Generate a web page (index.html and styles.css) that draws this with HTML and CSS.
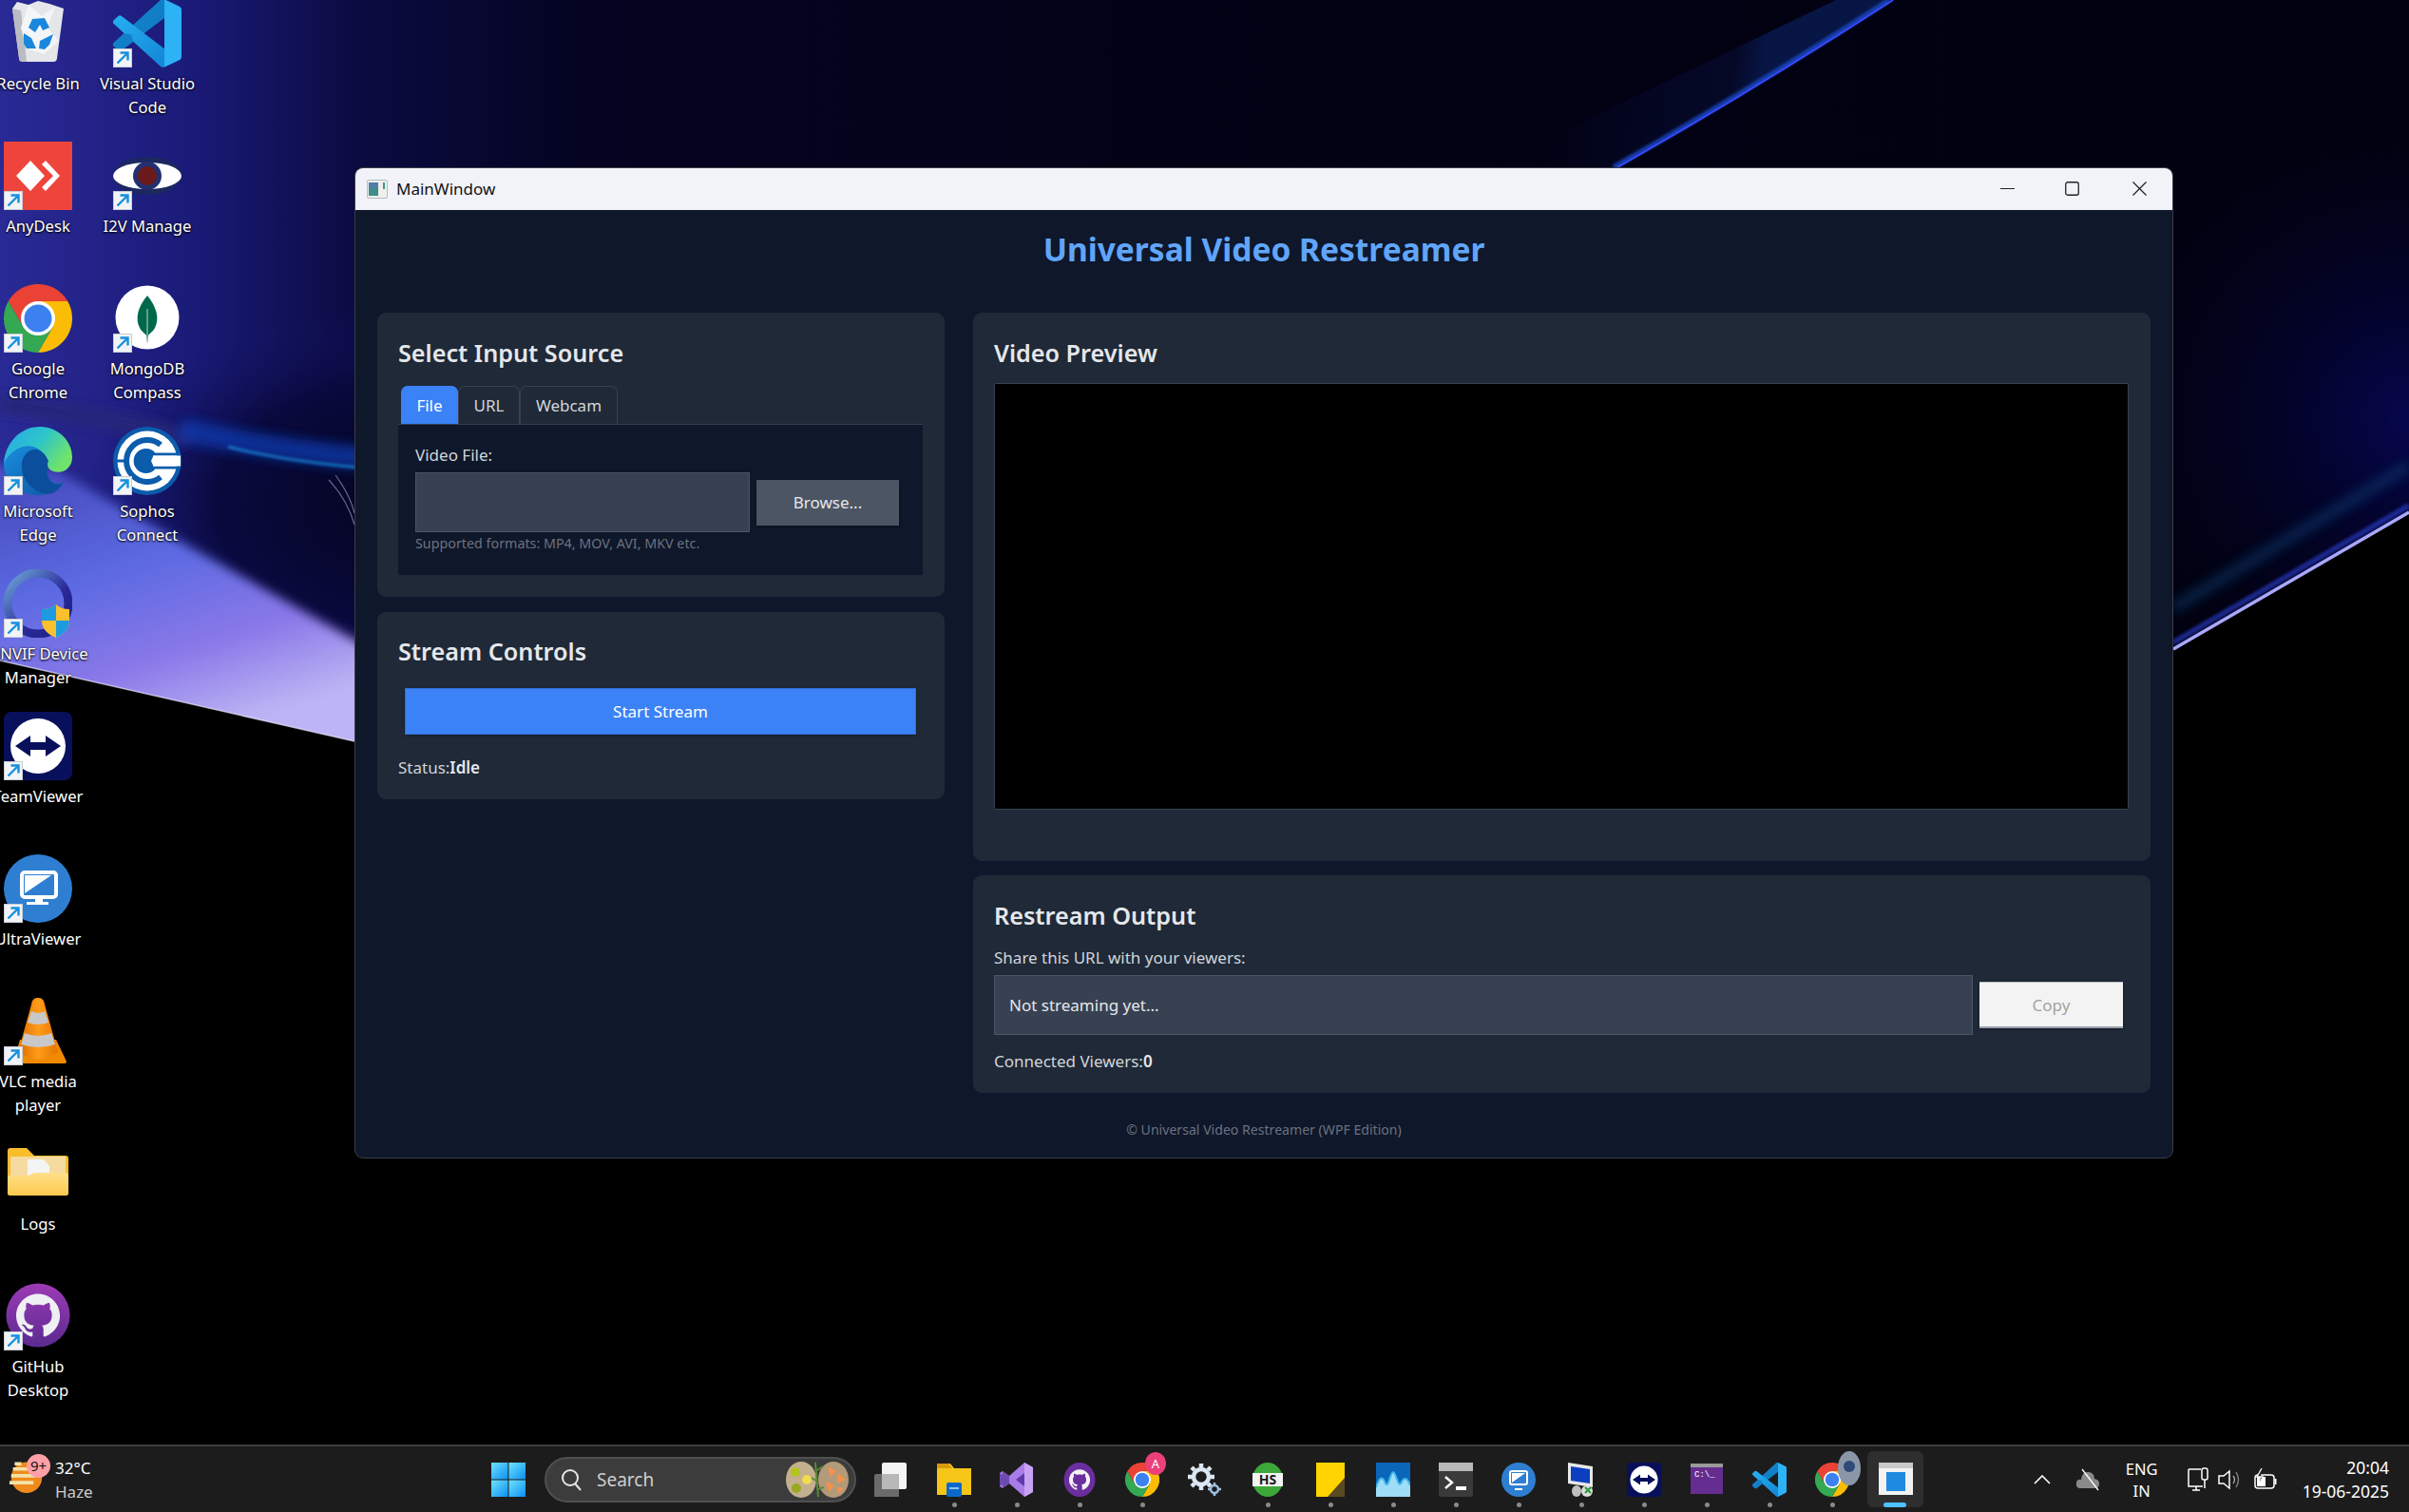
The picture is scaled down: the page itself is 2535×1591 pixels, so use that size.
FILE: index.html
```html
<!DOCTYPE html>
<html lang="en">
<head>
<meta charset="utf-8">
<title>MainWindow</title>
<link rel="stylesheet" href="styles.css">
</head>
<body>
<svg class="defs" aria-hidden="true">
  <defs>
    <linearGradient id="gVs" x1="0" y1="0" x2="1" y2="1"><stop offset="0" stop-color="#29b6f6"/><stop offset="1" stop-color="#0f7fd0"/></linearGradient>
    <linearGradient id="gEdge" x1="0" y1="0" x2="1" y2="0.5"><stop offset="0" stop-color="#2aa6ec"/><stop offset=".55" stop-color="#2cc5c9"/><stop offset="1" stop-color="#6fe36b"/></linearGradient>
    <linearGradient id="gEdgeB" x1="0" y1="0" x2="1" y2="1"><stop offset="0" stop-color="#1a8fe0"/><stop offset="1" stop-color="#0c52a0"/></linearGradient>
    <linearGradient id="gRing" x1="0" y1="0" x2="1" y2="1"><stop offset="0" stop-color="#6ea6d8"/><stop offset=".6" stop-color="#2a2a9a"/><stop offset="1" stop-color="#1d1d80"/></linearGradient>
    <linearGradient id="gGh" x1="0" y1="0" x2="0" y2="1"><stop offset="0" stop-color="#9c3bb5"/><stop offset="1" stop-color="#5b2a90"/></linearGradient>
    <linearGradient id="gWin" x1="0" y1="0" x2="1" y2="1"><stop offset="0" stop-color="#6fe3ff"/><stop offset="1" stop-color="#0a8ff0"/></linearGradient>
    <linearGradient id="gCone" x1="0" y1="0" x2="1" y2="0"><stop offset="0" stop-color="#d96a00"/><stop offset=".5" stop-color="#ff9c1a"/><stop offset="1" stop-color="#e67600"/></linearGradient>
    <linearGradient id="gFold" x1="0" y1="0" x2="0" y2="1"><stop offset="0" stop-color="#ffe08a"/><stop offset="1" stop-color="#fcc94e"/></linearGradient>

    <symbol id="i-recycle" viewBox="0 0 72 72">
      <path d="M9 10 L14 3 L26 6 L36 2 L48 5 L63 10 L56 62 Q56 66 52 66 H20 Q16 66 16 62Z" fill="#e4e6ea"/>
      <path d="M9 10 L16 62 Q16 66 20 66 H24 L18 12Z" fill="#b9bcc2"/>
      <path d="M26 6 L40 18 L54 8 L46 30 L58 44 L42 58 L24 52 L18 30Z" fill="#f4f5f7"/>
      <g fill="#1a86dc"><path d="M30 21 L43 20 L48 30 L41 33 L38 27 L33 35 L26 30Z"/><path d="M21 36 L29 41 L34 52 L24 52 L21 47Z"/><path d="M38 44 L52 37 L48 48 L43 53 L37 52Z"/></g>
    </symbol>
    <symbol id="i-vscode" viewBox="0 0 100 100">
      <path fill="url(#gVs)" d="M96.46 10.8L75.86.9a6.2 6.2 0 0 0-7.1 1.2L29.5 38 12.4 25a4.2 4.2 0 0 0-5.3.2L1.4 30.4a4.2 4.2 0 0 0 0 6.2L16.2 50 1.4 63.4a4.2 4.2 0 0 0 0 6.2l5.7 5.2a4.2 4.2 0 0 0 5.3.2l17.1-13 39.3 35.9a6.2 6.2 0 0 0 7.1 1.2l20.6-9.9a6.2 6.2 0 0 0 3.5-5.6V16.4a6.2 6.2 0 0 0-3.5-5.6zM75 72.7 45.2 50 75 27.3z"/>
      <path fill="#0865ad" d="M68.8 2.1L29.5 38l16 12L75 27.3V1.6a6 6 0 0 0-6.2.5zM16.2 50 1.4 63.4a4.2 4.2 0 0 0 0 6.2l5.7 5.2a4.2 4.2 0 0 0 5.3.2l17.1-13-3-10z" opacity=".55"/>
      <path fill="#2db2f5" d="M75 .6 96.5 10.800a6.200 6.200 0 0 1 3.500 5.600V83.600a6.200 6.200 0 0 1-3.500 5.600L75 99.400z"/>
    </symbol>
    <symbol id="i-anydesk" viewBox="0 0 72 72">
      <rect width="72" height="72" fill="#ef443b"/>
      <path d="M13 36 L28 20 L43 36 L28 52Z" fill="#fff"/>
      <path d="M40 24 L44 20 L59 36 L44 52 L40 48 L52 36Z" fill="#fff"/>
    </symbol>
    <symbol id="i-i2v" viewBox="0 0 72 72">
      <ellipse cx="36" cy="36" rx="36" ry="20" fill="#1d2860"/>
      <ellipse cx="36" cy="36" rx="36" ry="14" fill="#fff"/>
      <circle cx="36" cy="36" r="15" fill="#24306e"/>
      <circle cx="36" cy="36" r="10" fill="#6a1a1a"/>
    </symbol>
    <symbol id="i-chrome" viewBox="0 0 72 72">
      <path fill="#ea4335" d="M4.800 18A36 36 0 0 1 67.200 18L36 18 20.400 45Z"/>
      <path fill="#fbbc05" d="M67.200 18A36 36 0 0 1 36 72L51.600 45 36 18Z"/>
      <path fill="#34a853" d="M36 72A36 36 0 0 1 4.800 18L20.400 45H51.600Z"/>
      <circle cx="36" cy="36" r="18" fill="#fff"/>
      <circle cx="36" cy="36" r="14.500" fill="#3b82f0"/>
    </symbol>
    <symbol id="i-mongo" viewBox="0 0 72 72">
      <circle cx="36" cy="35" r="33.500" fill="#fff"/>
      <path d="M36 12 C46 24 49 36 44 46 C42 50 38 52 37 54 L36 62 L35 54 C34 52 30 50 28 46 C23 36 26 24 36 12Z" fill="#00684a"/>
      <path d="M35.500 26 H36.500 V62 H35.500Z" fill="#b8d8c8"/>
    </symbol>
    <symbol id="i-edge" viewBox="0 0 72 72">
      <path fill="url(#gEdgeB)" d="M0 38 C3 26 17 18 30 20 C42 22 49 32 46 42 C43 54 52 64 64 58 C56 68 46 72 36 72 C16 72 0 58 0 38Z"/>
      <path fill="#0b4f9c" d="M34 24 C22 24 16 36 20 50 C24 62 36 70 46 71 C54 70 58 66 62 60 C52 64 43 54 46 42 C48 32 42 25 34 24Z"/>
      <path fill="url(#gEdge)" d="M0 38 C2 16 18 0 38 0 C58 0 72 16 72 32 C72 44 62 50 52 47 C46 45 45 40 47 36 C42 24 30 18 20 21 C10 24 4 31 0 38Z"/>
    </symbol>
    <symbol id="i-sophos" viewBox="0 0 72 72">
      <circle cx="36" cy="36" r="36" fill="#0b5cab"/>
      <circle cx="36" cy="36" r="31.500" fill="#fff"/>
      <path d="M50 19 A22 22 0 1 0 50 53" fill="none" stroke="#0b5cab" stroke-width="6"/>
      <path d="M44 27 A13 13 0 1 0 44 45 L40 36Z" fill="#0b5cab"/>
      <path d="M2 36 H14" stroke="#0b5cab" stroke-width="3"/>
      <path d="M42 29 H68 M42 43 H68" stroke="#0b5cab" stroke-width="3"/>
      <path d="M42 30.500 H71 V41.500 H42Z" fill="#fff"/>
    </symbol>
    <symbol id="i-onvif" viewBox="0 0 72 72">
      <circle cx="36" cy="36" r="32" fill="none" stroke="url(#gRing)" stroke-width="9"/>
      <path d="M40 42 Q50 42 55 37 Q60 42 69 42 V54 Q69 66 55 72 Q40 66 40 54Z" fill="#fbc02d"/>
      <path d="M40 42 Q50 42 55 37 V54 H40Z M55 54 H69 Q69 66 55 72Z" fill="#1e9be0"/>
    </symbol>
    <symbol id="i-tv" viewBox="0 0 72 72">
      <rect width="72" height="72" rx="8" fill="#08105c"/>
      <circle cx="36" cy="36" r="29" fill="#fff"/>
      <path d="M12 36 L28 25 V32 H44 V25 L60 36 L44 47 V40 H28 V47Z" fill="#08105c"/>
    </symbol>
    <symbol id="i-ultra" viewBox="0 0 72 72">
      <circle cx="36" cy="36" r="36" fill="#2e7fd2"/>
      <rect x="19" y="19" width="36" height="26" rx="3" fill="none" stroke="#fff" stroke-width="4"/>
      <path d="M22 22 H50 L22 41Z" fill="#fff"/>
      <path d="M33 46 H41 V50 H47 V53 H24 V50 H33Z" fill="#fff"/>
    </symbol>
    <symbol id="i-vlc" viewBox="0 0 72 72">
      <path d="M17 45 H55 L66 68 Q66 70 63 70 H10 Z" fill="#f28a00"/>
      <path d="M35 1 H37 Q42 1 43 8 L57 58 Q45 66 36 66 Q27 66 15 58 L29 8 Q30 1 35 1Z" fill="url(#gCone)"/>
      <path d="M29 15 Q36 19 43 15 L47 27 Q36 31 25 27Z M22 38 Q36 44 50 38 L54 50 Q36 56 18 50Z" fill="#c8c8c8"/>
    </symbol>
    <symbol id="i-folder" viewBox="0 0 72 72">
      <path d="M4 12 Q4 9 7 9 H24 L32 17 H65 Q68 17 68 20 V56 Q68 59 65 59 H7 Q4 59 4 56Z" fill="#f9bd2c"/>
      <rect x="7" y="18" width="58" height="30" fill="#f5dba0"/>
      <path d="M25 21 H42 L48 28 V42 H25Z" fill="#f4f4f4"/>
      <path d="M4 38 H26 L32 35 H65 Q68 35 68 38 V56 Q68 59 65 59 H7 Q4 59 4 56Z" fill="url(#gFold)"/>
    </symbol>
    <symbol id="i-ghd" viewBox="0 0 72 72">
      <circle cx="36" cy="35" r="33.500" fill="url(#gGh)"/>
      <g transform="translate(13 12) scale(1.920)"><path fill="#eef0f3" d="M12 .297c-6.630 0-12 5.373-12 12 0 5.303 3.438 9.800 8.205 11.385.600.113.820-.258.820-.577 0-.285-.010-1.040-.015-2.040-3.338.724-4.042-1.610-4.042-1.610C4.422 18.070 3.633 17.700 3.633 17.700c-1.087-.744.084-.729.084-.729 1.205.084 1.838 1.236 1.838 1.236 1.070 1.835 2.809 1.305 3.495.998.108-.776.417-1.305.760-1.605-2.665-.300-5.466-1.332-5.466-5.930 0-1.310.465-2.380 1.235-3.220-.135-.303-.540-1.523.105-3.176 0 0 1.005-.322 3.300 1.230.960-.267 1.980-.399 3-.405 1.020.006 2.040.138 3 .405 2.280-1.552 3.285-1.230 3.285-1.230.645 1.653.240 2.873.120 3.176.765.840 1.230 1.910 1.230 3.220 0 4.610-2.805 5.625-5.475 5.920.420.360.810 1.096.810 2.220 0 1.606-.015 2.896-.015 3.286 0 .315.210.690.825.570C20.565 22.092 24 17.592 24 12.297c0-6.627-5.373-12-12-12"/></g>
    </symbol>
    <symbol id="i-shortcut" viewBox="0 0 20 20">
      <rect width="20" height="20" fill="#f1f3f6"/>
      <rect x=".5" y=".5" width="19" height="19" fill="none" stroke="#c9ced6"/>
      <path d="M4.500 15.500 L14 6 M7.500 4.500 H15.500 V12.500" fill="none" stroke="#1590de" stroke-width="2.400"/>
    </symbol>
    <symbol id="i-gh" viewBox="0 0 36 36">
      <ellipse cx="18" cy="18" rx="16.500" ry="18" fill="#6b2e9e"/>
      <g transform="translate(7 7) scale(.92)"><path fill="#f3f3f3" d="M12 .297c-6.630 0-12 5.373-12 12 0 5.303 3.438 9.800 8.205 11.385.600.113.820-.258.820-.577 0-.285-.010-1.040-.015-2.040-3.338.724-4.042-1.610-4.042-1.610C4.422 18.070 3.633 17.700 3.633 17.700c-1.087-.744.084-.729.084-.729 1.205.084 1.838 1.236 1.838 1.236 1.070 1.835 2.809 1.305 3.495.998.108-.776.417-1.305.760-1.605-2.665-.300-5.466-1.332-5.466-5.930 0-1.310.465-2.380 1.235-3.220-.135-.303-.540-1.523.105-3.176 0 0 1.005-.322 3.300 1.230.960-.267 1.980-.399 3-.405 1.020.006 2.040.138 3 .405 2.280-1.552 3.285-1.230 3.285-1.230.645 1.653.240 2.873.120 3.176.765.840 1.230 1.910 1.230 3.220 0 4.610-2.805 5.625-5.475 5.920.420.360.810 1.096.810 2.220 0 1.606-.015 2.896-.015 3.286 0 .315.210.690.825.570C20.565 22.092 24 17.592 24 12.297c0-6.627-5.373-12-12-12"/></g>
    </symbol>
  </defs>
</svg>

<div class="desktop">
  <svg class="wallpaper" viewBox="0 0 2535 1591" preserveAspectRatio="none" aria-hidden="true">
    <defs>
      <linearGradient id="wBase" gradientUnits="userSpaceOnUse" x1="0" y1="0" x2="2535" y2="0"><stop offset="0" stop-color="#2a2a96"/><stop offset=".08" stop-color="#1a1a78"/><stop offset=".147" stop-color="#0b0b42"/><stop offset=".24" stop-color="#040422"/><stop offset=".5" stop-color="#020216"/><stop offset="1" stop-color="#01010f"/></linearGradient>
      <linearGradient id="wLav" gradientUnits="userSpaceOnUse" x1="130" y1="490" x2="220" y2="770"><stop offset="0" stop-color="#4a50c4"/><stop offset=".35" stop-color="#5c6ae2"/><stop offset=".7" stop-color="#8a78e8"/><stop offset="1" stop-color="#bcb4f4"/></linearGradient>
      <radialGradient id="wWedge"><stop offset="0" stop-color="#04051f"/><stop offset=".6" stop-color="#08083a" stop-opacity=".9"/><stop offset="1" stop-color="#14146a" stop-opacity="0"/></radialGradient>
      <radialGradient id="wNavy" gradientUnits="userSpaceOnUse" cx="2535" cy="440" r="330"><stop offset="0" stop-color="#06064e"/><stop offset="1" stop-color="#030320" stop-opacity="0"/></radialGradient>
      <linearGradient id="wStreak" gradientUnits="userSpaceOnUse" x1="1640" y1="70" x2="1850" y2="100"><stop offset="0" stop-color="#1530a0" stop-opacity="0"/><stop offset=".85" stop-color="#10206a" stop-opacity=".22"/><stop offset="1" stop-color="#123aa0" stop-opacity=".35"/></linearGradient>
      <filter id="wBlur" filterUnits="userSpaceOnUse" x="-100" y="-100" width="2800" height="1800"><feGaussianBlur stdDeviation="6"/></filter>
      <filter id="wBlurS" filterUnits="userSpaceOnUse" x="-100" y="-100" width="2800" height="1800"><feGaussianBlur stdDeviation="1.500"/></filter>
    </defs>
    <rect width="2535" height="1591" fill="url(#wBase)"/>
    <rect x="2000" y="100" width="535" height="700" fill="url(#wNavy)"/>
    <ellipse cx="430" cy="530" rx="340" ry="210" fill="url(#wWedge)"/>
    <path d="M0 425 Q120 440 200 462" stroke="#28287a" stroke-width="18" fill="none" filter="url(#wBlur)"/>
    <path d="M190 452 Q280 472 400 484" stroke="#0a3ab0" stroke-width="24" fill="none" opacity=".75" filter="url(#wBlur)"/>
    <path d="M240 470 Q300 486 400 494" stroke="#18a0f0" stroke-width="3" fill="none" opacity=".65" filter="url(#wBlurS)"/>
    <path d="M-40 485 L60 495 L130 536 L420 700 V830 L-40 760Z" fill="url(#wLav)" filter="url(#wBlur)"/>
    <path d="M353 500 Q368 520 373 540 M346 505 Q365 525 373 552" stroke="#c8c8f0" stroke-width="1.200" fill="none" opacity=".5"/>
    <path d="M1566 176 L1932 0 L1992 0 Q1850 92 1702 176Z" fill="url(#wStreak)"/>
    <path d="M1698 176 Q1846 92 1988 0" stroke="#1a50d8" stroke-width="5" fill="none" opacity=".8" filter="url(#wBlurS)"/>
    <path d="M1702 176 Q1850 92 1992 0" stroke="#3a48ff" stroke-width="2" fill="none"/>
    <path d="M2287 640 L2535 490" stroke="#0a4a80" stroke-width="12" opacity=".45" fill="none" filter="url(#wBlur)"/>
    <path d="M2287 676 L2535 532" stroke="#2838c0" stroke-width="6" opacity=".7" fill="none" filter="url(#wBlurS)"/>
    <path d="M0 695 L373 780 L1300 1000 L2287 684 L2535 540 V1591 H0Z" fill="#000"/>
    <path d="M0 695 L373 780" stroke="#e8e6ff" stroke-width="1.500" opacity=".7"/>
    <path d="M2287 683 L2535 539" stroke="#aaa8ff" stroke-width="3.500"/>
  </svg>

  <div class="icons">
    <div class="dicon"><svg class="dicon-img"><use href="#i-recycle"/></svg><span class="dicon-label">Recycle Bin</span></div>
    <div class="dicon"><svg class="dicon-img"><use href="#i-anydesk"/></svg><svg class="sc"><use href="#i-shortcut"/></svg><span class="dicon-label">AnyDesk</span></div>
    <div class="dicon"><svg class="dicon-img"><use href="#i-chrome"/></svg><svg class="sc"><use href="#i-shortcut"/></svg><span class="dicon-label">Google Chrome</span></div>
    <div class="dicon"><svg class="dicon-img"><use href="#i-edge"/></svg><svg class="sc"><use href="#i-shortcut"/></svg><span class="dicon-label">Microsoft Edge</span></div>
    <div class="dicon"><svg class="dicon-img"><use href="#i-onvif"/></svg><svg class="sc"><use href="#i-shortcut"/></svg><span class="dicon-label">ONVIF Device Manager</span></div>
    <div class="dicon"><svg class="dicon-img"><use href="#i-tv"/></svg><svg class="sc"><use href="#i-shortcut"/></svg><span class="dicon-label">TeamViewer</span></div>
    <div class="dicon"><svg class="dicon-img"><use href="#i-ultra"/></svg><svg class="sc"><use href="#i-shortcut"/></svg><span class="dicon-label">UltraViewer</span></div>
    <div class="dicon"><svg class="dicon-img"><use href="#i-vlc"/></svg><svg class="sc"><use href="#i-shortcut"/></svg><span class="dicon-label">VLC media player</span></div>
    <div class="dicon"><svg class="dicon-img"><use href="#i-folder"/></svg><span class="dicon-label">Logs</span></div>
    <div class="dicon"><svg class="dicon-img"><use href="#i-ghd"/></svg><svg class="sc"><use href="#i-shortcut"/></svg><span class="dicon-label">GitHub Desktop</span></div>
    <div class="dicon"><svg class="dicon-img"><use href="#i-vscode"/></svg><svg class="sc"><use href="#i-shortcut"/></svg><span class="dicon-label">Visual Studio Code</span></div>
    <div class="dicon"><svg class="dicon-img"><use href="#i-i2v"/></svg><svg class="sc"><use href="#i-shortcut"/></svg><span class="dicon-label">I2V Manage</span></div>
    <div class="dicon"><svg class="dicon-img"><use href="#i-mongo"/></svg><svg class="sc"><use href="#i-shortcut"/></svg><span class="dicon-label">MongoDB Compass</span></div>
    <div class="dicon"><svg class="dicon-img"><use href="#i-sophos"/></svg><svg class="sc"><use href="#i-shortcut"/></svg><span class="dicon-label">Sophos Connect</span></div>
  </div>

  <div class="window">
    <div class="titlebar">
      <svg class="app-icon" viewBox="0 0 22 20"><rect x=".5" y=".5" width="21" height="19" rx="1.500" fill="#eef0ee" stroke="#b8bcc0"/><rect x="2" y="3" width="10" height="14" fill="#3f8f86"/><rect x="2" y="3" width="10" height="6" fill="#4f7fa8"/><rect x="17" y="3" width="2" height="7" fill="#3a9a78"/></svg>
      <span class="titlebar-text">MainWindow</span>
      <div class="caption">
        <svg class="cap-btn cap-min" viewBox="0 0 15 15"><path d="M0 7.500 H15" stroke="#222" stroke-width="1.200"/></svg>
        <svg class="cap-btn" viewBox="0 0 15 15"><rect x=".75" y=".75" width="13.500" height="13.500" rx="2" fill="none" stroke="#222" stroke-width="1.300"/></svg>
        <svg class="cap-btn" viewBox="0 0 15 15"><path d="M.5 .5 L14.500 14.500 M14.500 .5 L.5 14.500" stroke="#222" stroke-width="1.300"/></svg>
      </div>
    </div>
    <div class="content">
      <h1 class="app-title">Universal Video Restreamer</h1>
      <div class="columns">
        <div class="col-left">
          <section class="card card-input">
            <h2 class="card-title">Select Input Source</h2>
            <div class="tabs">
              <span class="tab tab-file tab-active">File</span>
              <span class="tab tab-url">URL</span>
              <span class="tab tab-webcam">Webcam</span>
            </div>
            <div class="tab-panel">
              <div class="label">Video File:</div>
              <div class="file-row">
                <div class="field field-file"></div>
                <div class="btn btn-browse">Browse...</div>
              </div>
              <div class="hint">Supported formats: MP4, MOV, AVI, MKV etc.</div>
            </div>
          </section>
          <section class="card card-controls">
            <h2 class="card-title">Stream Controls</h2>
            <div class="btn btn-start">Start Stream</div>
            <div class="label status">Status:<b class="strong">Idle</b></div>
          </section>
        </div>
        <div class="col-right">
          <section class="card card-preview">
            <h2 class="card-title">Video Preview</h2>
            <div class="video"></div>
          </section>
          <section class="card card-output">
            <h2 class="card-title">Restream Output</h2>
            <div class="label share">Share this URL with your viewers:</div>
            <div class="url-row">
              <div class="field field-url">Not streaming yet...</div>
              <div class="btn btn-copy">Copy</div>
            </div>
            <div class="label viewers">Connected Viewers:<b class="strong">0</b></div>
          </section>
        </div>
      </div>
      <div class="footer">© Universal Video Restreamer (WPF Edition)</div>
    </div>
  </div>

  <div class="taskbar">
    <div class="weather">
      <svg class="weather-icon" viewBox="0 0 40 46"><circle cx="20" cy="26" r="18" fill="#f08a1c"/><path d="M4 16 H24 M2 24 H30 M0 32 H28" stroke="#f3e2a8" stroke-width="4"/><path d="M6 10 H14" stroke="#f3e2a8" stroke-width="4"/></svg>
      <span class="badge-9">9+</span>
      <div class="weather-text"><span>32°C</span><span>Haze</span></div>
    </div>
    <svg class="win-logo" viewBox="0 0 36 36"><rect width="17.500" height="17.500" fill="url(#gWin)"/><rect x="18.500" width="17.500" height="17.500" fill="url(#gWin)"/><rect y="18.500" width="17.500" height="17.500" fill="url(#gWin)"/><rect x="18.500" y="18.500" width="17.500" height="17.500" fill="url(#gWin)"/></svg>
    <div class="search">
      <svg class="search-icon" viewBox="0 0 22 24"><circle cx="10" cy="10" r="8" fill="none" stroke="#e6e6e6" stroke-width="2"/><path d="M15 16 L21 23" stroke="#e6e6e6" stroke-width="2"/></svg>
      <span class="search-text">Search</span>
      <svg class="search-art" viewBox="0 0 70 40"><ellipse cx="18" cy="20" rx="16" ry="19" fill="#c4b08e"/><ellipse cx="52" cy="20" rx="16" ry="19" fill="#b39a78"/><circle cx="12" cy="12" r="5" fill="#b4c420"/><circle cx="24" cy="20" r="5" fill="#f0dc50"/><circle cx="13" cy="29" r="5" fill="#98a820"/><path d="M46 6 l9 5 -6 6z M57 13 l8 7 -9 4z M44 22 l9 4 -6 7z M56 28 l7 1 -6 6z" fill="#f4914e"/><path d="M33 2 L36 38 M35 10 L41 6 M35 22 L29 18 M36 30 L42 28" stroke="#5a8a38" stroke-width="2"/></svg>
    </div>
    <div class="apps">
      <div class="app"><svg class="app-svg" viewBox="0 0 36 36"><rect x="8" width="26" height="28" rx="2" fill="#f4f4f4"/><rect x="0" y="12" width="26" height="34" rx="2" fill="#6b6b6b"/><rect x="8" y="12" width="18" height="16" fill="#b8b8b8"/></svg></div>
      <div class="app dot"><svg class="app-svg" viewBox="0 0 36 36"><path d="M0 3 Q0 1 2 1 H14 L18 6 H36 V34 H0Z" fill="#f5c518"/><path d="M0 1 H12 L16 6 H0Z" fill="#d99a10"/><rect x="10" y="21" width="16" height="15" rx="2" fill="#0a68c8"/><rect x="13" y="26" width="10" height="2" fill="#8cc4f4"/></svg></div>
      <div class="app dot"><svg class="app-svg" viewBox="0 0 36 36"><path d="M26 0 L35 5 V31 L26 36 L10 22 L3 27 L0 25 V11 L3 9 L10 14Z" fill="#a97ce8"/><path d="M26 0 L35 5 V31 L26 36Z" fill="#c9a2f5"/><path d="M0 11 L10 18 L0 25Z M3 9 L10 14 V22 L3 27Z" fill="#6c4ab0"/><path d="M26 11 L17 18 L26 25Z" fill="#5f3aa8"/></svg></div>
      <div class="app dot"><svg class="app-svg"><use href="#i-gh"/></svg></div>
      <div class="app dot"><svg class="app-svg"><use href="#i-chrome"/></svg><span class="app-badge">A</span></div>
      <div class="app"><svg class="app-svg" viewBox="0 0 36 36"><g fill="none" stroke="#dbe7f2" stroke-width="4.500"><circle cx="14" cy="15" r="8"/><path d="M14 1 V5 M14 25 V29 M0 15 H4 M24 15 H28 M4 5 L7 8 M21 22 L24 25 M24 5 L21 8 M7 22 L4 25"/></g><g fill="none" stroke="#9cc0e0" stroke-width="2.500"><circle cx="28" cy="28" r="4"/><path d="M28 21 V24 M28 32 V35 M21 28 H24 M32 28 H35"/></g></svg></div>
      <div class="app dot"><svg class="app-svg" viewBox="0 0 36 36"><ellipse cx="18" cy="18" rx="16" ry="18" fill="#3da83a"/><path d="M2 11 H34 V25 H2Z" fill="#f3f3f3"/><text class="hs-text" x="18" y="23">HS</text></svg></div>
      <div class="app dot"><svg class="app-svg" viewBox="0 0 36 36"><path d="M3 0 H33 V36 H3Z" fill="#ffd400"/><path d="M33 16 V36 H15Z" fill="#5a4a20"/></svg></div>
      <div class="app dot"><svg class="app-svg" viewBox="0 0 36 36"><rect y="0" width="36" height="36" fill="#0a66b8"/><path d="M0 26 C4 14 7 14 10 22 C13 28 15 10 18 10 C21 10 23 26 26 22 C29 16 32 14 36 24 V36 H0Z" fill="#9fdcf6"/><path d="M0 26 C4 14 7 14 10 22 C13 28 15 10 18 10 C21 10 23 26 26 22 C29 16 32 14 36 24" fill="none" stroke="#3fb6ea" stroke-width="2"/></svg></div>
      <div class="app dot"><svg class="app-svg" viewBox="0 0 36 36"><rect width="36" height="36" rx="3" fill="#3a3a3a"/><rect width="36" height="9" fill="#b8b8b8"/><path d="M7 15 L14 21 L7 27" fill="none" stroke="#fff" stroke-width="2.500"/><rect x="18" y="25" width="11" height="4" fill="#fff"/></svg></div>
      <div class="app dot"><svg class="app-svg" viewBox="0 0 36 36"><ellipse cx="18" cy="18" rx="18" ry="18" fill="#2e7fd2"/><rect x="9" y="9" width="18" height="14" rx="2" fill="none" stroke="#fff" stroke-width="2"/><path d="M11 21 L25 11 H11Z" fill="#fff"/><path d="M14 27 H22 V29 H14Z" fill="#fff"/></svg></div>
      <div class="app dot"><svg class="app-svg" viewBox="0 0 36 36"><path d="M4 0 L30 4 V26 L4 22Z" fill="#e8e8e8"/><path d="M7 4 L27 7 V22 L7 19Z" fill="#0c3fc0"/><circle cx="24" cy="30" r="6" fill="#ddd"/><path d="M22 26 L28 32 M28 26 L22 32" stroke="#2a9a3a" stroke-width="2"/><ellipse cx="13" cy="30" rx="5" ry="6" fill="#c0c0c0"/></svg></div>
      <div class="app dot"><svg class="app-svg"><use href="#i-tv"/></svg></div>
      <div class="app dot"><svg class="app-svg" viewBox="0 0 36 36"><rect x="1" y="1" width="34" height="32" fill="#652d90"/><rect x="1" y="1" width="34" height="4" fill="#9a9a9a"/><text class="prompt-text" x="5" y="15">C:\_</text></svg></div>
      <div class="app dot"><svg class="app-svg"><use href="#i-vscode"/></svg></div>
      <div class="app dot"><svg class="app-svg"><use href="#i-chrome"/></svg><svg class="app-avatar" viewBox="0 0 24 36"><ellipse cx="12" cy="18" rx="12" ry="18" fill="#8a97a8"/><circle cx="12" cy="16" r="6" fill="#2d4a78"/></svg></div>
      <div class="app app-active"><svg class="app-svg" viewBox="0 0 36 36"><rect width="36" height="34" fill="#f2f2f2"/><rect width="36" height="6" fill="#c8c8c8"/><rect x="8" y="10" width="20" height="20" fill="#1e8ae0"/></svg></div>
    </div>
    <div class="tray">
      <svg class="tray-chevron" viewBox="0 0 18 10"><path d="M1 9 L9 1 L17 9" fill="none" stroke="#fff" stroke-width="1.600"/></svg>
      <svg class="tray-cloud" viewBox="0 0 26 24"><path d="M4 21 Q0 20 1 15 Q2 11 6 12 Q7 3 14 4 Q20 5 20 11 Q25 12 25 16 Q25 21 21 21Z" fill="#8a8a8a"/><path d="M7 1 L24 23" stroke="#fff" stroke-width="1.300"/></svg>
      <div class="tray-lang"><span>ENG</span><span>IN</span></div>
      <svg class="tray-net" viewBox="0 0 24 26"><path d="M2 2 H15 M2 2 V20 H17" fill="none" stroke="#fff" stroke-width="1.500"/><rect x="16" y="1" width="6" height="12" rx="2" fill="none" stroke="#fff" stroke-width="1.500"/><path d="M19 13 V22 M6 24 H14 M10 20 V24" stroke="#fff" stroke-width="1.500"/></svg>
      <svg class="tray-vol" viewBox="0 0 26 24"><path d="M2 8 H7 L13 3 V21 L7 16 H2Z" fill="none" stroke="#fff" stroke-width="1.500"/><path d="M17 8 Q20 12 17 16" fill="none" stroke="#aaa" stroke-width="1.300"/><path d="M20 4 Q25 12 20 20" fill="none" stroke="#888" stroke-width="1.300"/></svg>
      <svg class="tray-bat" viewBox="0 0 26 24"><rect x="2" y="7" width="20" height="14" rx="3" fill="none" stroke="#fff" stroke-width="1.500"/><rect x="22.500" y="11" width="2" height="6" fill="#fff"/><rect x="4" y="9" width="9" height="10" fill="#fff"/><path d="M9 0 L4 9 H10 L7 16" fill="#1c1c1c" stroke="#fff" stroke-width="1.300"/></svg>
      <div class="tray-clock"><span>20:04</span><span>19-06-2025</span></div>
    </div>
  </div>
</div>
</body>
</html>
```

FILE: styles.css
```css
html, body {
  margin: 0;
  padding: 0;
  background: #000;
}
body {
  width: 2535px;
  height: 1591px;
  overflow: hidden;
  font-family: "Noto Sans", "Open Sans", sans-serif;
}
h1, h2 { margin: 0; }
.defs { position: absolute; width: 0; height: 0; }
.desktop { position: relative; width: 2535px; height: 1591px; overflow: hidden; }
.wallpaper { position: absolute; inset: 0; width: 2535px; height: 1591px; }

/* desktop icons */
.icons {
  position: absolute;
  left: -17px;
  top: -1px;
  display: grid;
  grid-auto-flow: column;
  grid-template-rows: repeat(10, 150px);
  grid-auto-columns: 114px;
  column-gap: 1px;
}
.dicon {
  position: relative;
  display: flex;
  flex-direction: column;
  align-items: center;
}
.dicon-img { width: 72px; height: 72px; flex: none; }
.sc { position: absolute; left: 21px; top: 52px; width: 20px; height: 20px; }
.dicon-label {
  margin-top: 4px;
  width: 114px;
  text-align: center;
  color: #fff;
  font-size: 16.6px;
  line-height: 25px;
  text-shadow: 0 1px 2px #000, 0 0 3px rgba(0,0,0,.7);
}

/* window */
.window {
  position: absolute;
  left: 373px;
  top: 176px;
  width: 1914px;
  height: 1043px;
  box-sizing: border-box;
  border: 1px solid #3b3c46;
  border-radius: 9px;
  background: #0f172a;
  display: flex;
  flex-direction: column;
  overflow: hidden;
}
.titlebar {
  flex: none;
  height: 44px;
  display: flex;
  align-items: center;
  background: #f1f3f9;
  padding-left: 12px;
  padding-bottom: 1px;
  box-sizing: border-box;
  color: #111;
}
.app-icon { width: 22px; height: 20px; flex: none; margin-right: 9px; }
.titlebar-text { font-size: 17px; }
.caption { margin-left: auto; display: flex; gap: 56px; padding-right: 27px; }
.cap-btn { width: 15px; height: 15px; display: block; }
.cap-min { margin-right: -3px; }
.content {
  flex: 1;
  display: flex;
  flex-direction: column;
  padding: 0 23px;
  min-height: 0;
}
.app-title {
  height: 108px;
  box-sizing: border-box;
  padding-top: 16px;
  text-align: center;
  font-size: 33.500px;
  line-height: 50px;
  font-weight: 700;
  color: #60a5fa;
}
.columns { display: flex; gap: 30px; }
.col-left { width: 597px; flex: none; display: flex; flex-direction: column; gap: 16px; }
.col-right { flex: 1; display: flex; flex-direction: column; gap: 15px; min-width: 0; }
.card {
  background: #1f2937;
  border-radius: 9px;
  padding: 24px 23px 23px 22px;
  box-sizing: border-box;
}
.card-title {
  font-size: 25.200px;
  line-height: 36px;
  font-weight: 600;
  color: #e5e7eb;
}
.tabs { display: flex; margin-top: 17px; padding-left: 3px; height: 40px; }
.tab {
  box-sizing: border-box;
  display: flex;
  align-items: center;
  justify-content: center;
  height: 40px;
  font-size: 17px;
  color: #d1d5db;
  background: #1f2937;
  border: 1px solid #374151;
  border-bottom: 0;
  border-radius: 7px 7px 0 0;
}
.tab-file { width: 60px; }
.tab-url { width: 65px; }
.tab-webcam { width: 103px; }
.tab-active { background: #3b82f6; border-color: #3b82f6; color: #fff; }
.tab-panel {
  background: #0f172a;
  border-top: 1px solid #374151;
  padding: 20px 18px 22px;
}
.label { font-size: 17px; line-height: 24px; color: #d1d5db; }
.strong { color: #e5e7eb; font-weight: 600; }
.file-row { display: flex; align-items: center; gap: 7px; margin-top: 6px; }
.field {
  box-sizing: border-box;
  height: 63px;
  background: #374151;
  border: 1px solid #4b5563;
}
.field-file { width: 352px; }
.btn {
  box-sizing: border-box;
  display: flex;
  align-items: center;
  justify-content: center;
  font-size: 17px;
  box-shadow: 0 1px 3px rgba(0,0,0,.35);
}
.btn-browse { width: 150px; height: 48px; background: #4b5563; color: #e5e7eb; }
.hint { font-size: 14.300px; line-height: 23px; color: #6b7280; }
.card-controls { padding-bottom: 21px; padding-top: 23px; }
.btn-start {
  width: 538px;
  height: 49px;
  margin: 21px 0 0 7px;
  background: #3b82f6;
  border: 1px solid #2f6fd8;
  color: #fff;
}
.status { margin-top: 23px; }
.card-preview { height: 577px; }
.video {
  box-sizing: border-box;
  height: 449px;
  margin-top: 14px;
  background: #000;
  border: 1px solid #374151;
  border-radius: 2px;
}
.card-output { height: 229px; }
.share { margin-top: 15px; }
.url-row { display: flex; align-items: center; gap: 7px; margin-top: 6px; }
.field-url {
  flex: 1;
  display: flex;
  align-items: center;
  padding-left: 15px;
  color: #e5e7eb;
  font-size: 17px;
}
.btn-copy {
  width: 151px;
  height: 49px;
  margin-right: 6px;
  background: #f3f3f3;
  border-top: 1px solid #b8bcc2;
  border-bottom: 2px solid #9ca3af;
  color: #a3a3a3;
}
.viewers { margin-top: 16px; }
.footer {
  margin-top: 27px;
  text-align: center;
  font-size: 14.100px;
  line-height: 24px;
  color: #6b7280;
}

/* taskbar */
.taskbar {
  position: absolute;
  left: 0;
  right: 0;
  bottom: 0;
  height: 71px;
  box-sizing: border-box;
  background: #1c1c1c;
  border-top: 2px solid #3e3e3e;
  display: flex;
  align-items: center;
  color: #fff;
}
.weather { position: relative; width: 517px; flex: none; height: 69px; display: flex; align-items: center; }
.weather-icon { position: absolute; left: 10px; top: 9px; width: 36px; height: 42px; }
.badge-9 {
  position: absolute;
  left: 28px;
  top: 8px;
  width: 25px;
  height: 25px;
  border-radius: 50%;
  background: #ffa0a8;
  color: #111;
  font-size: 15px;
  line-height: 25px;
  text-align: center;
}
.weather-text {
  position: relative;
  margin-left: 58px;
  display: flex;
  flex-direction: column;
  font-size: 17px;
  line-height: 25px;
}
.weather-text span:last-child { color: #ccc; }
.win-logo { width: 36px; height: 36px; flex: none; }
.search {
  flex: none;
  margin-left: 20px;
  width: 328px;
  height: 48px;
  box-sizing: border-box;
  border: 2px solid #505050;
  border-radius: 24px;
  background: #3c3c3c;
  display: flex;
  align-items: center;
  padding-left: 15px;
}
.search-icon { width: 22px; height: 24px; flex: none; }
.search-text { margin-left: 16px; font-size: 19px; color: #cfcfcf; }
.search-art { margin-left: auto; margin-right: 4px; width: 70px; height: 40px; }
.apps { display: flex; margin-left: 4px; height: 69px; align-items: center; }
.app {
  position: relative;
  width: 66px;
  height: 59px;
  flex: none;
  display: flex;
  align-items: center;
  justify-content: center;
  box-sizing: border-box;
}
.app-svg { width: 36px; height: 36px; overflow: hidden; }
.dot::after {
  content: "";
  position: absolute;
  left: 30.500px;
  bottom: 0;
  width: 5px;
  height: 5px;
  border-radius: 50%;
  background: #8a8a8a;
}
.app-active { background: #2e2e2e; border-radius: 6px; width: 59px; margin: 0 3px 0 4px; }
.app-active::after {
  content: "";
  position: absolute;
  left: 17px;
  bottom: 0;
  width: 24px;
  height: 5px;
  border-radius: 3px;
  background: #4cc2ff;
}
.app-badge {
  position: absolute;
  left: 36px;
  top: 1px;
  width: 22px;
  height: 24px;
  border-radius: 50%;
  background: #ec407a;
  color: #fff;
  font-size: 13px;
  line-height: 24px;
  text-align: center;
}
.app-avatar { position: absolute; left: 39px; top: 0; width: 24px; height: 36px; }
.hs-text { font-family: "Noto Sans", sans-serif; font-size: 14px; font-weight: 700; fill: #1a1a1a; text-anchor: middle; }
.prompt-text { font-family: "Liberation Mono", monospace; font-size: 9px; fill: #fff; }
.tray {
  margin-left: auto;
  position: relative;
  display: flex;
  align-items: center;
  padding-right: 21px;
}
.tray-chevron { width: 18px; height: 10px; margin-right: 26px; }
.tray-cloud { width: 26px; height: 24px; margin-right: 22px; }
.tray-lang {
  display: flex;
  flex-direction: column;
  align-items: center;
  width: 44px;
  font-size: 16.500px;
  line-height: 23px;
  margin-right: 25px;
}
.tray-net { width: 24px; height: 26px; margin-right: 8px; }
.tray-vol { width: 26px; height: 24px; margin-right: 12px; }
.tray-bat { width: 26px; height: 24px; }
.tray-clock {
  margin-left: 26px;
  display: flex;
  flex-direction: column;
  align-items: flex-end;
  font-size: 17.500px;
  line-height: 25px;
}
```
